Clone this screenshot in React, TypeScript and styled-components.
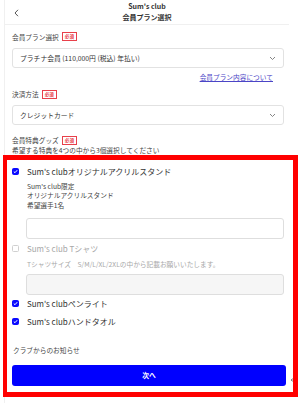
import styled, { createGlobalStyle } from "styled-components";

const GlobalStyle = createGlobalStyle`
  html, body {
    margin: 0;
    padding: 0;
    background: #ffffff;
  }
  body {
    font-family: "Noto Sans CJK JP", "Noto Sans", sans-serif;
    color: #333333;
  }
`;

const StyledPage = styled.div`
  width: 285px;
  margin-left: 4px;
  border-left: 1px solid #f0f0f0;
  min-height: 403px;
  box-sizing: border-box;
`;

const StyledHeader = styled.header`
  position: relative;
  height: 25px;
  box-sizing: border-box;
  border-bottom: 1px solid #f0f0f0;
  display: flex;
  flex-direction: column;
  align-items: center;
  justify-content: center;
  padding-bottom: 1px;
`;

const StyledHeaderLine = styled.div`
  font-size: 7px;
  font-weight: 700;
  line-height: 10.4px;
  color: #333;
`;

const StyledBack = styled.button`
  position: absolute;
  left: 7px;
  top: 8px;
  width: 8px;
  height: 9px;
  padding: 0;
  border: none;
  background: none;
  display: flex;
  align-items: center;
  justify-content: center;
`;

const StyledContent = styled.main`
  padding: 0 0 0 7px;
  width: 272px;
`;

const StyledLabelRow = styled.div<{ $mt: number }>`
  display: flex;
  align-items: center;
  gap: 3px;
  height: 10px;
  margin-top: ${(p) => p.$mt}px;
  font-size: 6.7px;
  color: #444;
`;

const StyledBadge = styled.span`
  display: inline-flex;
  align-items: center;
  justify-content: center;
  height: 7px;
  padding: 0 2px;
  border: 1px solid #e8404a;
  color: #e8404a;
  font-size: 4.6px;
  font-weight: 700;
  line-height: 1;
`;

const StyledSelect = styled.div<{ $mt: number }>`
  display: flex;
  align-items: center;
  justify-content: space-between;
  height: 20px;
  box-sizing: border-box;
  margin-top: ${(p) => p.$mt}px;
  padding: 0 7px 0 7px;
  border: 1px solid #e2e2e2;
  border-radius: 3px;
  font-size: 6.8px;
  color: #333;
`;

const StyledLinkRow = styled.div`
  display: flex;
  justify-content: flex-end;
  margin-top: 4px;
  padding-right: 11px;
  line-height: 10px;
`;

const StyledLink = styled.a`
  font-size: 6.7px;
  color: #4b45c6;
  text-decoration: underline;
`;

const StyledHelp = styled.p`
  margin: 0;
  font-size: 6.7px;
  line-height: 10px;
  color: #444;
`;

const StyledSection = styled.section`
  position: relative;
  padding-top: 10px;
  padding-bottom: 11px;
`;

const StyledHighlight = styled.div`
  position: absolute;
  left: -9px;
  right: -14px;
  top: 0;
  bottom: 0;
  border: 5px solid #ff0000;
  border-left-width: 4px;
  pointer-events: none;
`;

const StyledCheckRow = styled.label<{ $mt: number; $disabled?: boolean }>`
  display: flex;
  align-items: center;
  gap: 8px;
  height: 12px;
  margin-top: ${(p) => p.$mt}px;
  font-size: 8px;
  color: ${(p) => (p.$disabled ? "#a8a8a8" : "#333")};
`;

const StyledBox = styled.span<{ $checked: boolean }>`
  display: inline-flex;
  align-items: center;
  justify-content: center;
  width: 7px;
  height: 7px;
  box-sizing: border-box;
  border-radius: 1.5px;
  background: ${(p) => (p.$checked ? "#0a0aff" : "#ffffff")};
  border: 1px solid ${(p) => (p.$checked ? "#0a0aff" : "#d0d0d0")};
`;

const StyledDesc = styled.div<{ $mt: number; $muted?: boolean }>`
  margin-top: ${(p) => p.$mt}px;
  padding-left: 15px;
  font-size: 6.7px;
  line-height: 9.7px;
  color: ${(p) => (p.$muted ? "#a8a8a8" : "#444")};
`;

const StyledInput = styled.input<{ $mt: number }>`
  display: block;
  width: 258px;
  height: 21px;
  box-sizing: border-box;
  margin: ${(p) => p.$mt}px 0 0 14px;
  border: 1px solid #dedede;
  border-radius: 3px;
  background: #ffffff;
  &:disabled {
    background: #f6f6f6;
  }
`;

const StyledNotice = styled.div`
  margin-top: 17px;
  padding-left: 1px;
  font-size: 6.7px;
  line-height: 10px;
  color: #444;
`;

const StyledBtnRow = styled.div`
  position: relative;
  margin-top: 10px;
`;

const StyledNextBtn = styled.button`
  display: block;
  width: 274px;
  height: 21px;
  margin: 0;
  border: none;
  border-radius: 3px;
  background: #0000ff;
  color: #ffffff;
  font-family: "Noto Sans CJK JP", sans-serif;
  font-size: 6.8px;
  font-weight: 700;
`;

const StyledReturnMark = styled.span`
  position: absolute;
  left: 278px;
  top: 11px;
  display: flex;
`;

const Chevron = () => (
  <svg width="7" height="5" viewBox="0 0 7 5">
    <polyline points="1,1 3.5,3.5 6,1" fill="none" stroke="#777" strokeWidth="0.9" />
  </svg>
);

const Check = () => (
  <svg width="5" height="5" viewBox="0 0 5 5">
    <polyline points="0.8,2.6 2,3.7 4.2,1.2" fill="none" stroke="#fff" strokeWidth="1" />
  </svg>
);

type Item = { label: string; checked: boolean };

const Benefit = ({ label, checked, mt }: Item & { mt: number }) => (
  <StyledCheckRow $mt={mt} $disabled={!checked}>
    <StyledBox $checked={checked}>{checked && <Check />}</StyledBox>
    {label}
  </StyledCheckRow>
);

const App = () => {
  return (
    <StyledPage>
      <GlobalStyle />
      <StyledHeader>
        <StyledBack type="button" aria-label="戻る">
          <svg width="5" height="8" viewBox="0 0 5 8">
            <polyline points="4,0.8 1,4 4,7.2" fill="none" stroke="#555" strokeWidth="1" />
          </svg>
        </StyledBack>
        <StyledHeaderLine>Sum's club</StyledHeaderLine>
        <StyledHeaderLine>会員プラン選択</StyledHeaderLine>
      </StyledHeader>

      <StyledContent>
        <StyledLabelRow $mt={6.5}>
          会員プラン選択<StyledBadge>必須</StyledBadge>
        </StyledLabelRow>
        <StyledSelect $mt={6.5}>
          プラチナ会員 (110,000円 (税込) 年払い)
          <Chevron />
        </StyledSelect>
        <StyledLinkRow>
          <StyledLink href="#">会員プラン内容について</StyledLink>
        </StyledLinkRow>

        <StyledLabelRow $mt={7}>
          決済方法<StyledBadge>必須</StyledBadge>
        </StyledLabelRow>
        <StyledSelect $mt={6}>
          クレジットカード
          <Chevron />
        </StyledSelect>

        <StyledLabelRow $mt={10}>
          会員特典グッズ<StyledBadge>必須</StyledBadge>
        </StyledLabelRow>
        <StyledHelp>希望する特典を4つの中から3個選択してください</StyledHelp>

        <StyledSection>
          <Benefit label="Sum's clubオリジナルアクリルスタンド" checked mt={0} />
          <StyledDesc $mt={4.5}>
            Sum's club限定
            <br />
            オリジナルアクリルスタンド
            <br />
            希望選手1名
          </StyledDesc>
          <StyledInput $mt={7} type="text" />

          <Benefit label="Sum's club Tシャツ" checked={false} mt={3.7} />
          <StyledDesc $mt={5.6} $muted>
            Tシャツサイズ　S/M/L/XL/2XLの中から記載お願いいたします。
          </StyledDesc>
          <StyledInput $mt={4} type="text" disabled />

          <Benefit label="Sum's clubペンライト" checked mt={2.7} />
          <Benefit label="Sum's clubハンドタオル" checked mt={6.3} />

          <StyledNotice>クラブからのお知らせ</StyledNotice>

          <StyledBtnRow>
            <StyledNextBtn type="button">次へ</StyledNextBtn>
            <StyledReturnMark>
              <svg width="7" height="6" viewBox="0 0 7 6">
                <polyline points="6,0.5 6,4 1,4" fill="none" stroke="#888" strokeWidth="1" />
                <polyline points="2.5,2.5 1,4 2.5,5.5" fill="none" stroke="#888" strokeWidth="1" />
              </svg>
            </StyledReturnMark>
          </StyledBtnRow>

          <StyledHighlight />
        </StyledSection>
      </StyledContent>
    </StyledPage>
  );
};

export default App;
